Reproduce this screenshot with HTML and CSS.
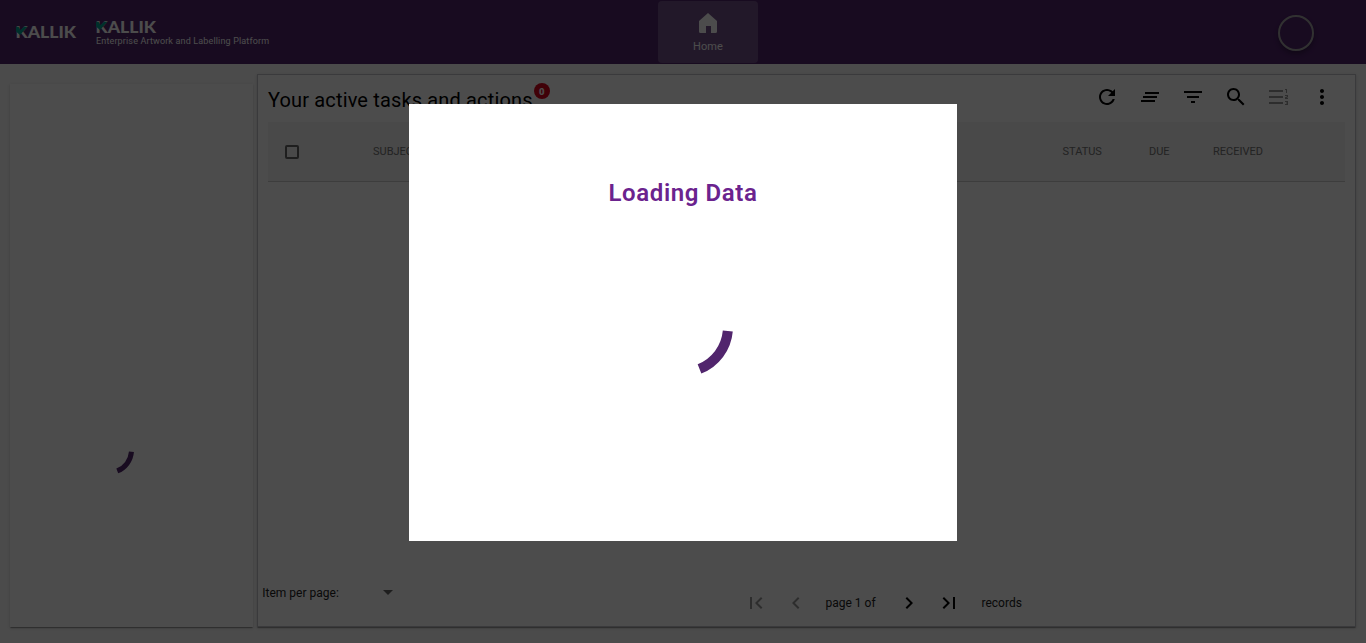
FILE: index.html
```html
<!DOCTYPE html>
<html lang="en">
<head>
<meta charset="utf-8">
<title>Kallik</title>
<link rel="stylesheet" href="styles.css">
</head>
<body>
<div class="app">
  <header class="header">
    <svg class="logo" width="64" height="24" viewBox="0 -5 64 24"><text class="logo-text" x="-0.500" y="12.300" textLength="60.500" lengthAdjust="spacingAndGlyphs">KALLIK</text><path class="logo-accent" d="M0 .7H2.500L4.500 4L8 .7H11.500L4 9L0 5.500Z"/></svg>
    <div class="brand">
      <svg class="logo" width="64" height="24" viewBox="0 -5 64 24"><text class="logo-text" x="-0.500" y="12.300" textLength="60.500" lengthAdjust="spacingAndGlyphs">KALLIK</text><path class="logo-accent" d="M0 .7H2.500L4.500 4L8 .7H11.500L4 9L0 5.500Z"/></svg>
      <span class="tagline">Enterprise Artwork and Labelling Platform</span>
    </div>
    <a class="home">
      <svg width="18" height="20" viewBox="0 0 18 20"><path fill="#fff" d="M9 0L18 8V18.500Q18 20 16.500 20H12V13H7V20H1.500Q0 20 0 18.500V8Z"/></svg>
      <span>Home</span>
    </a>
    <div class="avatar"></div>
  </header>
  <main class="main">
    <aside class="side card">
      <svg width="50" height="50" viewBox="0 0 100 100"><path class="arc" d="M94.900 53.500A45 45 0 0 1 66.500 91.900"/></svg>
    </aside>
    <section class="tasks card">
      <div class="titlebar">
        <h1 class="title">Your active tasks and actions</h1><span class="badge">0</span>
        <div class="tools">
          <svg width="24" height="24" viewBox="0 0 24 24"><path d="M17.650 6.350C16.200 4.900 14.210 4 12 4c-4.420 0-7.990 3.580-7.990 8s3.570 8 7.990 8c3.730 0 6.840-2.550 7.730-6h-2.080c-.82 2.330-3.040 4-5.650 4-3.310 0-6-2.690-6-6s2.690-6 6-6c1.660 0 3.140.69 4.220 1.780L13 11h7V4l-2.350 2.350z"/></svg>
          <svg width="24" height="24" viewBox="0 0 24 24"><path d="M5 13h14v-2H5v2zm-2 4h14v-2H3v2zM7 7v2h14V7H7z"/></svg>
          <svg width="24" height="24" viewBox="0 0 24 24"><path d="M10 18h4v-2h-4v2zM3 6v2h18V6H3zm3 7h12v-2H6v2z"/></svg>
          <svg width="24" height="24" viewBox="0 0 24 24"><path d="M15.500 14h-.79l-.28-.27C15.410 12.590 16 11.110 16 9.500 16 5.910 13.090 3 9.500 3S3 5.910 3 9.500 5.910 16 9.500 16c1.610 0 3.090-.59 4.230-1.570l.27.28v.79l5 4.990L20.490 19l-4.990-5zm-6 0C7.010 14 5 11.990 5 9.500S7.010 5 9.500 5 14 7.010 14 9.500 11.990 14 9.500 14z"/></svg>
          <svg class="dim" width="24" height="24" viewBox="0 0 24 24"><path d="M2 5h14v2H2zM2 11h14v2H2zM2 17h14v2H2zM18 4h2v4h-1V5h-1zM18 10h3v2.200L19.300 13H21v1h-3v-1.700l2-.8V11h-2zM18 16h3v4h-3v-1h2v-.5h-1v-1h1V17h-2z"/></svg>
          <svg width="24" height="24" viewBox="0 0 24 24"><path d="M12 8c1.100 0 2-.9 2-2s-.9-2-2-2-2 .9-2 2 .9 2 2 2zm0 2c-1.100 0-2 .9-2 2s.9 2 2 2 2-.9 2-2-.9-2-2-2zm0 6c-1.100 0-2 .9-2 2s.9 2 2 2 2-.9 2-2-.9-2-2-2z"/></svg>
        </div>
      </div>
      <div class="thead">
        <span class="check"></span><span>SUBJECT</span><span>STATUS</span><span>DUE</span><span>RECEIVED</span>
      </div>
      <footer class="footer">
        <div class="per-page">Item per page:<i class="caret"></i></div>
        <div class="pager">
          <svg class="dim" width="24" height="24" viewBox="0 0 24 24"><path d="M18.410 16.590L13.820 12l4.590-4.590L17 6l-6 6 6 6zM6 6h2v12H6z"/></svg>
          <svg class="dim prev" width="24" height="24" viewBox="0 0 24 24"><path d="M15.410 7.410L14 6l-6 6 6 6 1.410-1.410L10.830 12z"/></svg>
          <span class="page">page 1 of</span>
          <svg width="24" height="24" viewBox="0 0 24 24"><path d="M10 6L8.590 7.410 13.170 12l-4.580 4.590L10 18l6-6z"/></svg>
          <svg class="last" width="24" height="24" viewBox="0 0 24 24"><path d="M5.590 7.410L10.180 12l-4.590 4.590L7 18l6-6-6-6zM16 6h2v12h-2z"/></svg>
          <span class="records">records</span>
        </div>
      </footer>
    </section>
  </main>
</div>
<div class="overlay">
  <div class="modal">
    <h2 class="modal-title">Loading Data</h2>
    <svg width="100" height="100" viewBox="0 0 100 100"><path class="arc" d="M94.800 54A45 45 0 0 1 66.500 91.900"/></svg>
  </div>
</div>
</body>
</html>
```
FILE: styles.css
```css
* { box-sizing: border-box; }
body { margin: 0; font-family: Roboto, "Liberation Sans", sans-serif; overflow: hidden; }
svg { display: block; flex: none; }
.app { height: 643px; display: flex; flex-direction: column; background: #fafafa; }
.header { height: 64px; flex: none; background: #51256d; display: grid; grid-template-columns: 80px 562px 100px 1fr; padding-left: 16px; color: #fff; }
.header > .logo { margin-top: 21px; }
.logo-text { font: 900 16px Lato, sans-serif; fill: #fff; }
.logo-accent { fill: #00a08f; }
.brand { padding-top: 15.5px; }
.tagline { display: block; font-size: 9px; line-height: 12px; margin-top: -4.5px; white-space: nowrap; letter-spacing: .15px; }
.home { height: 62px; margin-top: 1px; border-radius: 4px; background: rgba(255, 255, 255, .2); display: flex; flex-direction: column; align-items: center; padding-top: 12px; font-size: 11px; line-height: 14px; gap: 7px; letter-spacing: .1px; }
.avatar { width: 36px; height: 36px; border: 2px solid #a5a5a5; border-radius: 50%; margin: 15px 52px 0 auto; box-shadow: 0 3px 5px rgba(0, 0, 0, .3); }
.main { flex: 1; display: grid; grid-template-columns: 243px 1099px; gap: 4px; padding: 10px 10px 16px; }
.card { background: #fff; box-shadow: 0 2px 1px -1px rgba(0, 0, 0, .2), 0 1px 1px rgba(0, 0, 0, .14), 0 1px 3px rgba(0, 0, 0, .12); }
.side { margin-top: 10px; padding: 341px 0 0 74px; }
.arc { fill: none; stroke: #51256d; stroke-width: 10; }
.tasks { border: 1px solid #c4c4c8; padding: 0 10px; display: flex; flex-direction: column; }
.titlebar { display: flex; height: 47px; }
.title { font-size: 20px; font-weight: 400; line-height: 24px; margin: 13px 0 0; letter-spacing: .15px; }
.badge { width: 16px; height: 16px; border-radius: 50%; background: #d8041c; color: #fff; font-size: 9.5px; font-weight: 900; line-height: 17px; text-align: center; margin: 8px 0 0 1.2px; }
.tools { display: flex; gap: 19px; margin: 10px 11px 0 auto; }
.dim { opacity: .4; }
.thead { height: 60px; background: #f3f3f3; border-bottom: 1px solid #ccc; display: grid; grid-template-columns: 88px 689.5px 86.5px 64px 1fr; padding-left: 17px; align-items: center; font-size: 11px; color: #757575; }
.check { width: 14px; height: 14px; border: 2px solid #666; border-radius: 2px; }
.footer { margin-top: auto; height: 58px; display: grid; grid-template-columns: 475.5px 1fr; align-items: start; font-size: 12px; color: #222; }
.per-page { margin: 17px 0 0 -5.7px; line-height: 16px; display: flex; align-items: center; }
.caret { border: 5px solid transparent; border-top-color: #666; border-bottom: 0; margin: -1px 0 0 44.7px; }
.pager { height: 24px; margin-top: 23px; display: flex; align-items: center; }
.prev { margin-left: 16px; }
.page { width: 71.5px; margin-left: 18px; }
.last { margin-left: 16px; }
.records { margin-left: 20.5px; }
.overlay { position: absolute; inset: 0; background: rgba(0, 0, 0, .7); display: flex; justify-content: center; align-items: flex-start; padding-top: 104px; }
.modal { width: 548px; height: 437px; background: #fff; display: flex; flex-direction: column; align-items: center; }
.modal-title { margin: 73px 0 0; height: 100px; font-size: 24px; line-height: 32px; font-weight: 600; color: #6b238e; letter-spacing: .6px; }
```
